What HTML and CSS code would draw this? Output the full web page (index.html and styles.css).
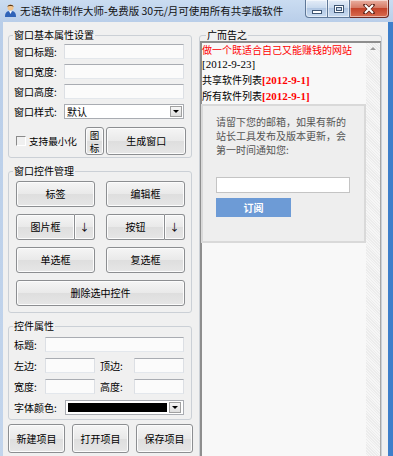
FILE: index.html
```html
<!DOCTYPE html>
<html lang="zh-CN">
<head>
    <meta charset="UTF-8">
    <meta name="viewport" content="width=device-width, initial-scale=1.0">
    <title>无语软件制作大师</title>
    <link rel="stylesheet" href="styles.css">
</head>
<body>
    <div class="window">
        <div class="titlebar">
            <svg class="app-icon" viewBox="0 0 13 14" width="13" height="14">
                <path d="M1 14 C1 9 3 8 6.5 8 C10 8 12 9 12 14 Z" fill="#2f63b8"/>
                <path d="M5 8 L6.5 11 L8 8 Z" fill="#fff"/>
                <circle cx="6.5" cy="4.5" r="3" fill="#f2c48c"/>
                <path d="M3.4 4 C3.6 1 9.4 1 9.6 4 C8.5 2.8 4.5 2.8 3.4 4 Z" fill="#5a3a1c"/>
            </svg>
            <span class="title">无语软件制作大师-免费版 30元/月可使用所有共享版软件</span>
            <div class="caption-buttons">
                <span class="cap-btn min"><i class="glyph-min"></i></span>
                <span class="cap-btn max"><i class="glyph-max"></i></span>
                <span class="cap-btn close">
                    <svg viewBox="0 0 12 10" width="12" height="10">
                        <path d="M2 1 L10 9 M10 1 L2 9" stroke="#5b2318" stroke-width="3.6" stroke-linecap="round"/>
                        <path d="M2 1 L10 9 M10 1 L2 9" stroke="#fff" stroke-width="2"/>
                    </svg>
                </span>
            </div>
        </div>

        <div class="frame">
            <div class="client">
                <div class="left-panel">
                    <fieldset class="group basic">
                        <legend>窗口基本属性设置</legend>
                        <div class="form-grid">
                            <label>窗口标题:</label><input class="textbox" type="text">
                            <label>窗口宽度:</label><input class="textbox" type="text">
                            <label>窗口高度:</label><input class="textbox" type="text">
                            <label>窗口样式:</label>
                            <div class="combo"><span class="combo-text">默认</span><span class="drop"></span></div>
                        </div>
                        <div class="make-row">
                            <label class="check"><span class="box"></span>支持最小化</label>
                            <button class="btn icon-btn"><span>图</span><span>标</span></button>
                            <button class="btn make-btn">生成窗口</button>
                        </div>
                    </fieldset>

                    <fieldset class="group controls">
                        <legend>窗口控件管理</legend>
                        <div class="ctrl-grid">
                            <button class="btn">标签</button>
                            <button class="btn">编辑框</button>
                            <div class="split">
                                <button class="btn">图片框</button>
                                <button class="btn arrow-btn">↓</button>
                            </div>
                            <div class="split">
                                <button class="btn">按钮</button>
                                <button class="btn arrow-btn">↓</button>
                            </div>
                            <button class="btn">单选框</button>
                            <button class="btn">复选框</button>
                            <button class="btn wide">删除选中控件</button>
                        </div>
                    </fieldset>

                    <fieldset class="group props">
                        <legend>控件属性</legend>
                        <div class="prop-grid">
                            <label>标题:</label><input class="textbox span3" type="text">
                            <label>左边:</label><input class="textbox" type="text">
                            <label class="second">顶边:</label><input class="textbox" type="text">
                            <label>宽度:</label><input class="textbox" type="text">
                            <label class="second">高度:</label><input class="textbox" type="text">
                        </div>
                        <div class="color-row">
                            <label>字体颜色:</label>
                            <div class="combo color-combo"><span class="swatch"></span><span class="drop"></span></div>
                        </div>
                    </fieldset>

                    <div class="project-row">
                        <button class="btn">新建项目</button>
                        <button class="btn">打开项目</button>
                        <button class="btn">保存项目</button>
                    </div>
                </div>

                <div class="right-panel">
                    <fieldset class="group ad">
                        <legend>广而告之</legend>
                        <div class="browser">
                            <div class="page">
                                <p class="headline">做一个既适合自己又能赚钱的网站</p>
                                <p class="date">[2012-9-23]</p>
                                <p class="list">共享软件列表<span class="red-date">[2012-9-1]</span></p>
                                <p class="list">所有软件列表<span class="red-date">[2012-9-1]</span></p>
                                <div class="subscribe">
                                    <p>请留下您的邮箱，如果有新的<br>站长工具发布及版本更新，会<br>第一时间通知您:</p>
                                    <input class="mail" type="text">
                                    <button class="sub-btn">订阅</button>
                                </div>
                            </div>
                            <div class="scrollbar"><span class="up"></span></div>
                        </div>
                    </fieldset>
                </div>
            </div>
        </div>
    </div>
</body>
</html>
```

FILE: styles.css
```css
* {
    box-sizing: border-box;
}

html,
body {
    margin: 0;
    height: 100%;
    overflow: hidden;
}

body {
    font-family: "Noto Sans CJK SC", sans-serif;
    font-size: 10px;
    color: #000;
    background: #bfd3ec;
}

button,
input {
    font-family: inherit;
    font-size: 10px;
    margin: 0;
}

.window {
    height: 470px;
    display: flex;
    flex-direction: column;
    background: linear-gradient(#cadcf1, #b9cee9 22px, #c3d5ec);
}

/* title bar */
.titlebar {
    height: 22px;
    flex-shrink: 0;
    display: flex;
    align-items: flex-start;
}

.app-icon {
    margin: 3px 0 0 4px;
}

.title {
    margin-left: 3px;
    line-height: 22px;
    font-size: 10.5px;
    color: #111;
    white-space: nowrap;
}

.caption-buttons {
    margin-left: auto;
    margin-right: 4px;
    display: flex;
}

.cap-btn {
    height: 18px;
    display: flex;
    align-items: center;
    justify-content: center;
    border: 1px solid #5f7898;
    border-top: none;
    background: linear-gradient(#e4edf8, #c9daee 45%, #b1c7e3 50%, #c9dcf1);
    box-shadow: inset 0 0 0 1px rgba(255, 255, 255, 0.5);
}

.cap-btn.min {
    width: 23px;
    border-bottom-left-radius: 4px;
}

.cap-btn.max {
    width: 22px;
    border-left: none;
}

.cap-btn.close {
    width: 39px;
    border-left: none;
    border-color: #6e2a22;
    border-bottom-right-radius: 4px;
    background: linear-gradient(#eab0a2, #d67b66 45%, #c4432a 50%, #d86c50);
}

.glyph-min {
    display: block;
    width: 10px;
    height: 4px;
    margin-top: 6px;
    background: #fff;
    border: 1px solid #3f5673;
}

.glyph-max {
    display: block;
    width: 10px;
    height: 8px;
    border: 1px solid #3f5673;
    box-shadow: inset 0 0 0 1px #fff, inset 0 0 0 2px #3f5673;
    background: #c9daee;
}

/* window body */
.frame {
    flex: 1;
    display: flex;
    padding-left: 3px;
    border-right: 5px solid #3d7fcb;
}

.client {
    flex: 1;
    display: flex;
    background: #f0f0f0;
}

.left-panel {
    width: 196px;
    flex-shrink: 0;
    padding: 6px 7px 0 5px;
}

.group {
    margin: 0;
    min-width: 0;
    padding: 2px 7px 2px 5px;
    border: 1px solid #cbd0d6;
    border-radius: 3px;
}

.group legend {
    padding: 0 1px;
    margin-left: -1px;
    line-height: 14px;
}

.textbox {
    height: 15px;
    width: 100%;
    padding: 0 2px;
    background: #fbfbfb;
    border: 1px solid;
    border-color: #a9acb2 #dcdfe4 #e3e7ec #dcdfe4;
    outline: none;
}

label {
    white-space: nowrap;
}

.form-grid {
    display: grid;
    grid-template-columns: 50px 1fr;
    grid-auto-rows: 15px;
    row-gap: 5px;
    align-items: center;
}

.combo {
    height: 15px;
    display: flex;
    align-items: center;
    background: #fff;
    border: 1px solid #a9acb2;
    padding: 1px;
}

.combo-text {
    flex: 1;
    padding-left: 1px;
    line-height: 13px;
}

.drop {
    width: 12px;
    height: 11px;
    margin-left: auto;
    border: 1px solid #a0a0a0;
    background: linear-gradient(#f6f6f6, #dedede);
    position: relative;
}

.drop::after {
    content: "";
    position: absolute;
    left: 2px;
    top: 3px;
    border-left: 3px solid transparent;
    border-right: 3px solid transparent;
    border-top: 3px solid #000;
}

.make-row {
    display: flex;
    align-items: center;
    height: 28px;
    margin-top: 8px;
}

.check {
    width: 71px;
    display: flex;
    align-items: center;
    padding-left: 2px;
    font-size: 9.6px;
}

.check .box {
    width: 10px;
    height: 10px;
    margin-right: 3px;
    border: 1px solid;
    border-color: #8a8a8a #fff #fff #8a8a8a;
}

.btn {
    padding: 0;
    color: #000;
    line-height: 12px;
    border: 1px solid #8c8e91;
    border-radius: 3px;
    background: linear-gradient(#f5f5f5, #e9e9e9 50%, #dedede 51%, #e6e6e6);
    box-shadow: inset 0 0 0 1px #fcfcfc;
}

.icon-btn {
    width: 20px;
    height: 28px;
    display: flex;
    flex-direction: column;
    align-items: center;
    justify-content: center;
    font-size: 9.5px;
}

.icon-btn span {
    display: block;
    line-height: 14px;
    height: 13px;
}

.make-btn {
    width: 80px;
    height: 28px;
    margin: 0 -2px 0 2px;
}

.controls {
    margin-top: 6px;
    padding-bottom: 6px;
}

.ctrl-grid {
    display: grid;
    grid-template-columns: 1fr 1fr;
    grid-auto-rows: 26px;
    column-gap: 11px;
    row-gap: 7px;
    margin: 1px -1px 0 2px;
}

.split {
    display: flex;
}

.split .btn:first-child {
    flex: 1;
    border-top-right-radius: 0;
    border-bottom-right-radius: 0;
}

.arrow-btn {
    width: 20px;
    border-left: none;
    border-top-left-radius: 0;
    border-bottom-left-radius: 0;
}

.wide {
    grid-column: span 2;
}

.props {
    margin-top: 6px;
    padding-top: 4px;
    padding-bottom: 4px;
}

.prop-grid {
    display: grid;
    grid-template-columns: 31px 50px 39px 50px;
    grid-auto-rows: 15px;
    row-gap: 6px;
    align-items: center;
}

.span3 {
    grid-column: span 3;
}

.prop-grid .second {
    padding-left: 5px;
}

.color-row {
    display: flex;
    align-items: center;
    margin-top: 6px;
}

.color-row label {
    width: 51px;
}

.color-combo {
    flex: 1;
    padding: 2px;
}

.swatch {
    flex: 1;
    height: 9px;
    margin-right: 2px;
    background: #000;
}

.project-row {
    display: grid;
    grid-template-columns: repeat(3, 57px);
    grid-auto-rows: 29px;
    column-gap: 7px;
    margin-top: 4px;
}

/* ad panel */
.right-panel {
    flex: 1;
    display: flex;
    flex-direction: column;
    padding: 6px 6px 0 0;
}

.ad {
    flex: 1;
    display: flex;
    flex-direction: column;
    padding: 0;
}

.ad legend {
    margin-left: 6px;
}

.browser {
    flex: 1;
    display: flex;
    margin-top: -1px;
    border: 1px solid #a8a8a8;
    border-left: 2px solid #8e8e8e;
    border-top: 2px solid #8e8e8e;
}

.page {
    flex: 1;
    background: #f8f8f8;
}

.page p {
    margin: 0;
    white-space: nowrap;
}

.headline {
    color: #f00;
    line-height: 14px;
}

.date {
    font-family: "Liberation Serif", serif;
    font-size: 11px;
    line-height: 15px;
}

.list {
    line-height: 16px;
}

.red-date {
    font-family: "Liberation Serif", serif;
    font-size: 11px;
    font-weight: bold;
    color: #f00;
}

.subscribe {
    margin-left: -1px;
    padding: 9px 0 24px 13px;
    border: 2px solid #d9d9d9;
    background: #eeeeee;
}

.subscribe p {
    line-height: 14px;
    color: #555;
}

.mail {
    display: block;
    width: 134px;
    height: 16px;
    margin-top: 20px;
    background: #fff;
    border: 1px solid #c4c4c4;
    outline: none;
}

.sub-btn {
    display: block;
    width: 75px;
    height: 19px;
    margin-top: 5px;
    border: none;
    background: #6d9bd6;
    color: #fff;
    font-weight: bold;
}

.scrollbar {
    width: 14px;
    display: flex;
    justify-content: center;
    background: repeating-linear-gradient(45deg, #ececec 0 1px, #f6f6f6 1px 2px);
}

.scrollbar .up {
    margin-top: 4px;
    width: 0;
    height: 0;
    border-left: 3px solid transparent;
    border-right: 3px solid transparent;
    border-bottom: 3px solid #9a9a9a;
}
```
